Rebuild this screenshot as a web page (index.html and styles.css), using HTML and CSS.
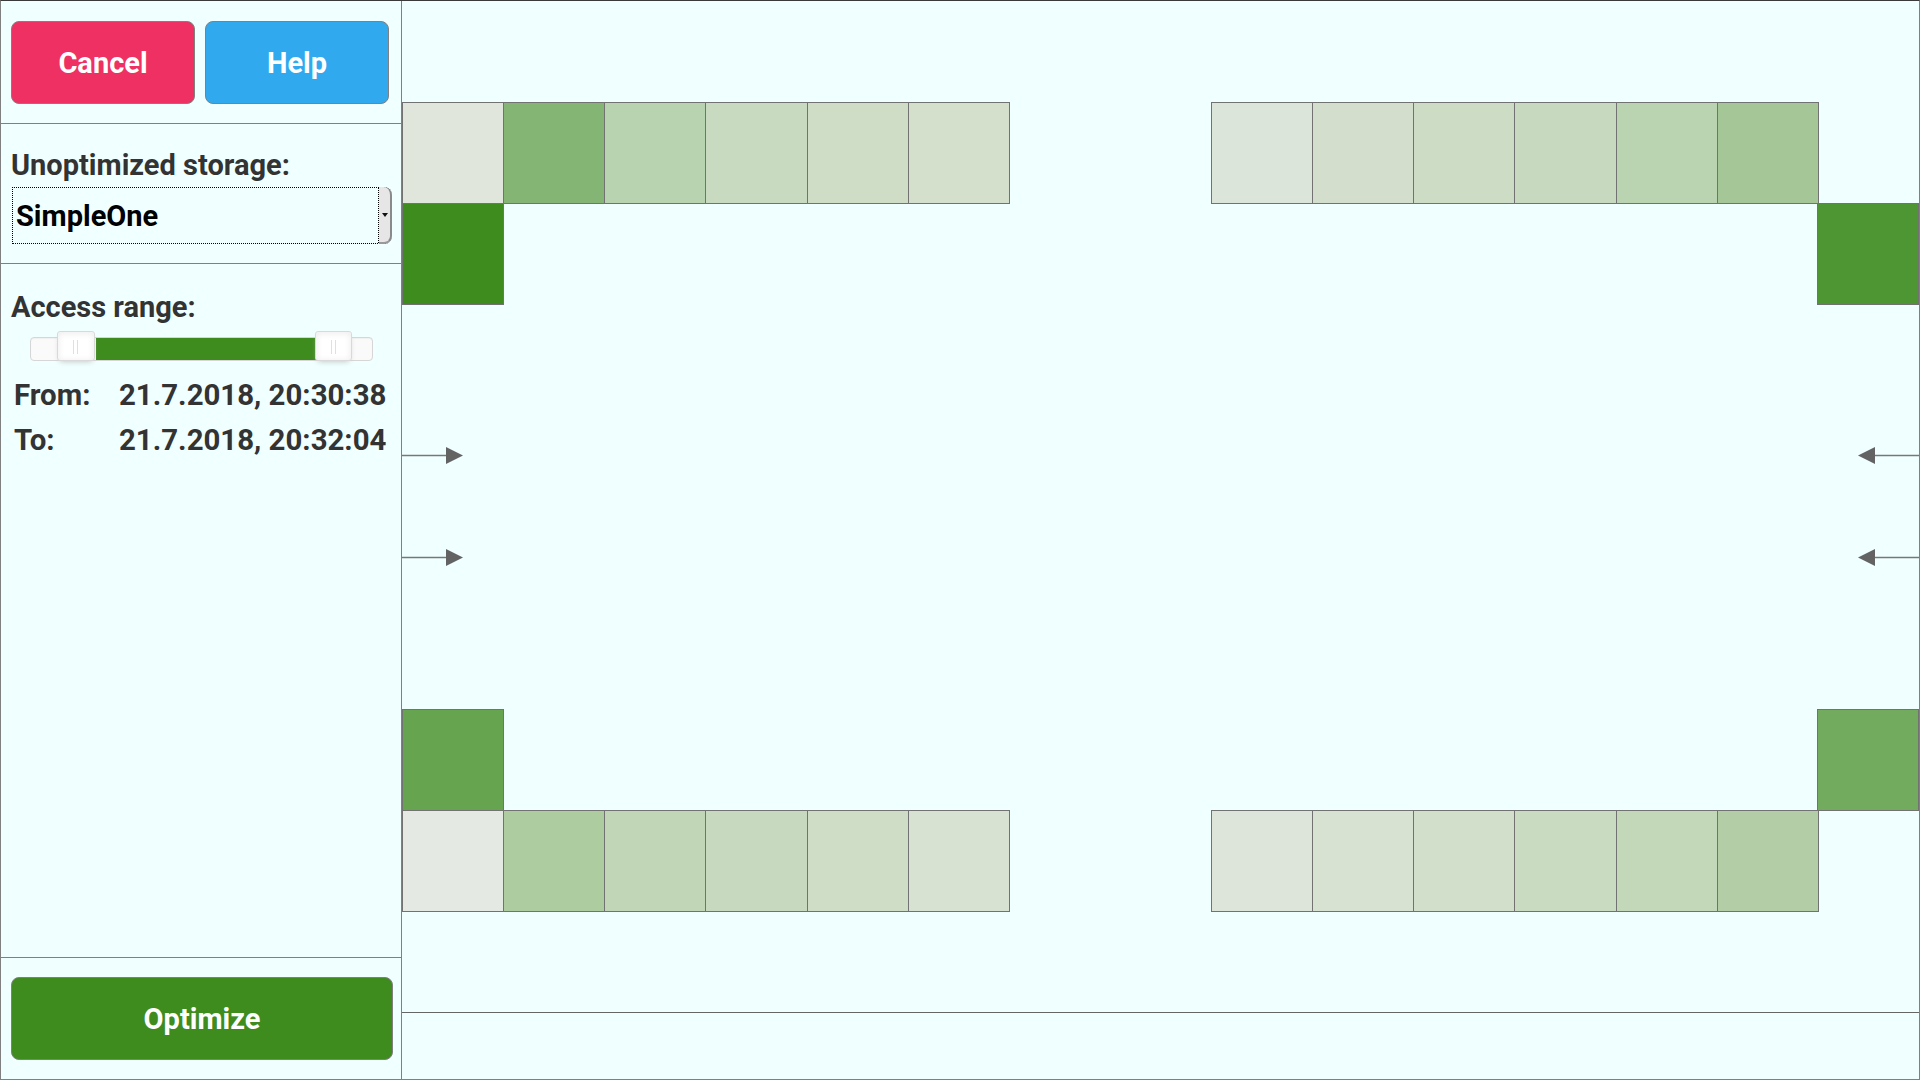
FILE: index.html
```html
<!DOCTYPE html>
<html>
<head>
<meta charset="utf-8">
<link rel="stylesheet" href="styles.css">
</head>
<body>
<div class="app">
  <aside class="sidebar">
    <div class="section actions">
      <button class="btn cancel">Cancel</button>
      <button class="btn help">Help</button>
    </div>
    <div class="section storage">
      <div class="label">Unoptimized storage:</div>
      <div class="select">
        <span class="select-value">SimpleOne</span>
        <span class="select-btn"><svg width="6" height="4" viewBox="0 0 6 4"><path d="M0 0H6L3 4Z" fill="#111"/></svg></span>
      </div>
    </div>
    <div class="section range">
      <div class="label">Access range:</div>
      <div class="slider">
        <div class="track"><div class="fill"></div></div>
        <div class="handle handle-lo"></div>
        <div class="handle handle-hi"></div>
      </div>
      <div class="times">
        <span class="t-label">From:</span><span class="t-value">21.7.2018, 20:30:38</span>
        <span class="t-label">To:</span><span class="t-value">21.7.2018, 20:32:04</span>
      </div>
    </div>
    <div class="section bottom">
      <button class="btn optimize">Optimize</button>
    </div>
  </aside>
  <main class="workspace">
    <div class="canvas">
      <div class="strip s-tl">
        <div class="sq c-e0e6db"></div><div class="sq c-85b574"></div><div class="sq c-b8d3af"></div><div class="sq c-c8dac0"></div><div class="sq c-cfddc6"></div><div class="sq c-d4dfcc"></div>
      </div>
      <div class="strip s-tr">
        <div class="sq c-dce5da"></div><div class="sq c-d3dfcc"></div><div class="sq c-cddcc5"></div><div class="sq c-c7dabf"></div><div class="sq c-bad3b0"></div><div class="sq c-a5c798"></div>
      </div>
      <div class="sq lone l-tl c-3e8b1e"></div>
      <div class="sq lone l-tr c-4e9634"></div>

      <svg class="arrow a-l1" width="61" height="17" viewBox="0 0 61 17"><path d="M0 8.5H45" stroke="#777" stroke-width="1.5"/><path d="M44 0L61 8.5L44 17Z" fill="#636363"/></svg>
      <svg class="arrow a-l2" width="61" height="17" viewBox="0 0 61 17"><path d="M0 8.5H45" stroke="#777" stroke-width="1.5"/><path d="M44 0L61 8.5L44 17Z" fill="#636363"/></svg>
      <svg class="arrow a-r1" width="61" height="17" viewBox="0 0 61 17"><path d="M16 8.5H61" stroke="#777" stroke-width="1.5"/><path d="M17 0L0 8.5L17 17Z" fill="#636363"/></svg>
      <svg class="arrow a-r2" width="61" height="17" viewBox="0 0 61 17"><path d="M16 8.5H61" stroke="#777" stroke-width="1.5"/><path d="M17 0L0 8.5L17 17Z" fill="#636363"/></svg>

      <div class="sq lone l-bl c-66a450"></div>
      <div class="sq lone l-br c-72ab5e"></div>
      <div class="strip s-bl">
        <div class="sq c-e5e9e3"></div><div class="sq c-adcc9f"></div><div class="sq c-c1d6b7"></div><div class="sq c-c7d9bf"></div><div class="sq c-cfddc6"></div><div class="sq c-d8e2d2"></div>
      </div>
      <div class="strip s-br">
        <div class="sq c-dde5da"></div><div class="sq c-d7e2d2"></div><div class="sq c-d2dfcb"></div><div class="sq c-c9dbc1"></div><div class="sq c-c3d7b9"></div><div class="sq c-b3cea7"></div>
      </div>
    </div>
    <div class="footer"></div>
  </main>
</div>
</body>
</html>
```
FILE: styles.css
```css
html, body {
  margin: 0;
  padding: 0;
  background: #f0ffff;
}
body {
  font-family: Roboto, "Liberation Sans", sans-serif;
  font-weight: 700;
  color: #333;
}
.app {
  display: flex;
  width: 1920px;
  height: 1080px;
  box-sizing: border-box;
  border: 1px solid #808080;
  border-top-color: #3a3a3a;
  background: #f0ffff;
}
.sidebar {
  width: 401px;
  flex: none;
  box-sizing: border-box;
  border-right: 1px solid #808080;
  display: flex;
  flex-direction: column;
}
.section {
  padding: 0 10px;
  border-bottom: 1px solid #808080;
}
.section.bottom {
  border-bottom: none;
  border-top: 1px solid #808080;
  padding-top: 19px;
  padding-bottom: 19px;
}
.actions {
  display: flex;
  gap: 10px;
  padding-top: 20px;
  padding-bottom: 19px;
}
.btn {
  font-family: Roboto, "Liberation Sans", sans-serif;
  font-weight: 700;
  font-size: 29px;
  color: #fff;
  border: 1px solid #808080;
  border-radius: 8px;
  height: 83px;
  padding: 0;
  margin: 0;
}
.cancel { width: 184px; background: #ef3062; }
.help { width: 184px; background: #30a9ee; }
.optimize { width: 382px; background: #3e8b1e; }

.label {
  font-size: 29px;
  line-height: 34px;
  color: #333;
}
.storage {
  padding-top: 24px;
  padding-bottom: 19px;
}
.select {
  margin-top: 5px;
  margin-left: 1px;
  width: 380px;
  height: 57px;
  box-sizing: border-box;
  display: flex;
  align-items: stretch;
  border: 1px dotted #000;
  border-right: none;
  border-radius: 0 8px 8px 0;
}
.select-value {
  flex: 1;
  display: flex;
  align-items: center;
  padding-left: 3px;
  font-size: 29px;
  color: #000;
  border-right: 1px dotted #000;
}
.select-btn {
  width: 11px;
  background: #e6e6e6;
  border-radius: 0 8px 8px 0;
  border-right: 2px solid #8a8a8a;
  border-bottom: 2px solid #9a9a9a;
  margin-top: -1px;
  margin-bottom: -1px;
  display: flex;
  align-items: center;
  justify-content: center;
}
.range {
  flex: 1;
  padding-top: 26px;
  border-bottom: none;
}
.slider {
  position: relative;
  margin-top: 7px;
  margin-left: 19px;
  width: 343px;
  height: 30px;
}
.track {
  position: absolute;
  left: 0;
  right: 0;
  top: 6px;
  height: 24px;
  box-sizing: border-box;
  background: #fafafa;
  border: 1px solid #d6d6d6;
  border-radius: 4px;
  box-shadow: inset 0 1px 1px #f0f0f0;
}
.fill {
  position: absolute;
  left: 65px;
  width: 220px;
  top: 0;
  bottom: 0;
  background: #3e8b1e;
}
.handle {
  position: absolute;
  top: 0;
  width: 38px;
  height: 30px;
  box-sizing: border-box;
  background: #fff;
  border: 1px solid #d9d9d9;
  border-radius: 3px;
  box-shadow: inset 0 0 1px #fff, inset 0 1px 7px #ebebeb, 0 3px 6px -3px #bbb;
}
.handle::before, .handle::after {
  content: "";
  position: absolute;
  top: 8px;
  height: 14px;
  width: 1px;
  background: #e0e0e0;
}
.handle::before { left: 15px; }
.handle::after { left: 19px; }
.handle-lo { left: 27px; }
.handle-hi { left: 285px; width: 37px; }

.times {
  display: grid;
  grid-template-columns: 105px auto;
  margin-top: 12px;
  margin-left: 3px;
  font-size: 29.4px;
  line-height: 45px;
  color: #333;
}

.workspace {
  flex: 1;
  display: flex;
  flex-direction: column;
}
.canvas {
  height: 1011px;
  border-bottom: 1px solid #666;
  display: grid;
  grid-template-columns: repeat(15, 1fr);
  grid-template-rows: repeat(10, 1fr);
}
.footer { flex: 1; }

.strip {
  display: flex;
  margin: 0 -1px -1px 0;
}
.sq {
  box-sizing: border-box;
  border: 1px solid #727272;
  flex: 1;
}
.sq + .sq { margin-left: -1px; }
.lone { margin: 0 -1px -1px 0; }
.s-tl { grid-row: 2; grid-column: 1 / 7; }
.s-tr { grid-row: 2; grid-column: 9 / 15; }
.s-bl { grid-row: 9; grid-column: 1 / 7; }
.s-br { grid-row: 9; grid-column: 9 / 15; }
.l-tl { grid-row: 3; grid-column: 1; }
.l-tr { grid-row: 3; grid-column: 15; margin-right: 0; }
.l-bl { grid-row: 8; grid-column: 1; }
.l-br { grid-row: 8; grid-column: 15; margin-right: 0; }

.arrow { align-self: center; }
.a-l1 { grid-row: 5; grid-column: 1; justify-self: start; }
.a-l2 { grid-row: 6; grid-column: 1; justify-self: start; }
.a-r1 { grid-row: 5; grid-column: 15; justify-self: end; }
.a-r2 { grid-row: 6; grid-column: 15; justify-self: end; }

.c-e0e6db { background: #e0e6db; }
.c-85b574 { background: #85b574; }
.c-b8d3af { background: #b8d3af; }
.c-c8dac0 { background: #c8dac0; }
.c-cfddc6 { background: #cfddc6; }
.c-d4dfcc { background: #d4dfcc; }
.c-dce5da { background: #dce5da; }
.c-d3dfcc { background: #d3dfcc; }
.c-cddcc5 { background: #cddcc5; }
.c-c7dabf { background: #c7dabf; }
.c-bad3b0 { background: #bad3b0; }
.c-a5c798 { background: #a5c798; }
.c-3e8b1e { background: #3e8b1e; }
.c-4e9634 { background: #4e9634; }
.c-66a450 { background: #66a450; }
.c-72ab5e { background: #72ab5e; }
.c-e5e9e3 { background: #e5e9e3; }
.c-adcc9f { background: #adcc9f; }
.c-c1d6b7 { background: #c1d6b7; }
.c-c7d9bf { background: #c7d9bf; }
.c-d8e2d2 { background: #d8e2d2; }
.c-dde5da { background: #dde5da; }
.c-d7e2d2 { background: #d7e2d2; }
.c-d2dfcb { background: #d2dfcb; }
.c-c9dbc1 { background: #c9dbc1; }
.c-c3d7b9 { background: #c3d7b9; }
.c-b3cea7 { background: #b3cea7; }
```
